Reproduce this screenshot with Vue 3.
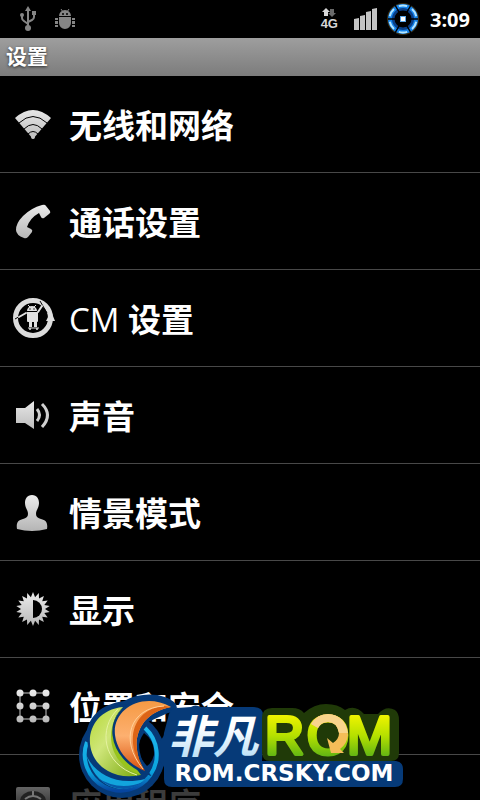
<script setup>
import { ref } from 'vue';

const title = '设置';

const items = ref([
  { icon: 'wifi', text: '无线和网络' },
  { icon: 'phone', text: '通话设置' },
  { icon: 'mod', latin: 'CM', text: '设置' },
  { icon: 'sound', text: '声音' },
  { icon: 'profile', text: '情景模式' },
  { icon: 'display', text: '显示' },
  { icon: 'security', text: '位置和安全' },
  { icon: 'apps', text: '应用程序', faded: true },
]);

// Star outline for the brightness icon
const sun = Array.from({ length: 36 }, (_, i) => {
  const r = i % 2 ? 12 : 17;
  const a = (i * Math.PI) / 18;
  return `${(24 + r * Math.sin(a)).toFixed(1)},${(24 - r * Math.cos(a)).toFixed(1)}`;
}).join(' ');

const dots = [
  [11, 11], [24, 11], [37, 11],
  [11, 24], [24, 24], [37, 24],
  [11, 37], [24, 37], [37, 37],
];
</script>

<template>
  <div class="screen">
    <header class="status-bar">
      <div class="status-group">
        <svg class="usb" width="20" height="28" viewBox="0 0 20 28" aria-hidden="true">
          <g fill="none" stroke="#858585" stroke-width="2">
            <path d="M10 5V24M4 10v3q0 2 2 3l4 3M16 9v3q0 2-2 3l-4 2" />
          </g>
          <path d="M10 1l3 5H7zM14 6h4v4h-4z" fill="#858585" />
          <circle cx="4" cy="10" r="2" fill="#858585" />
          <circle cx="10" cy="23" r="3" fill="#858585" />
        </svg>
        <svg width="22" height="22" viewBox="0 0 22 22" aria-hidden="true">
          <g fill="#858585">
            <path d="M5 8a6 6 0 0 1 12 0zM5 9h12v6a6 6 0 0 1-12 0z" />
            <path d="M1 10h3v2H1zM1 13h3v3H1zM1 17h3v2H1zM18 10h3v2h-3zM18 13h3v3h-3zM18 17h3v2h-3z" />
          </g>
          <path d="M7 1l2 3M15 1l-2 3" stroke="#858585" />
          <circle cx="9" cy="6" r="1" fill="#000" />
          <circle cx="13" cy="6" r="1" fill="#000" />
        </svg>
      </div>
      <div class="status-group right">
        <div class="network">
          <svg width="14" height="9" viewBox="0 0 14 9" aria-hidden="true">
            <path d="M4 0l4 4H6v4H2V4H0z" fill="#d8d8d8" />
            <path d="M10 9L6 5h2V1h4v4h2z" fill="#6a6a6a" />
          </svg>
          <span>4G</span>
        </div>
        <svg class="signal" width="24" height="22" viewBox="0 0 24 22" aria-hidden="true">
          <path
            d="M0 11l5-1v12H0zM6 8l5-1v15H6zM12 4l5-1v19h-5zM18 1l5-1v22h-5z"
            fill="#c4c4c4"
          />
        </svg>
        <svg class="battery" width="34" height="34" viewBox="0 0 34 34" aria-hidden="true">
          <circle cx="17" cy="17" r="15" fill="none" stroke="#3a2c10" stroke-width="2" />
          <circle cx="17" cy="17" r="11" fill="none" stroke="#0a3f86" stroke-width="6" />
          <circle cx="17" cy="17" r="13" fill="none" stroke="#1583ea" stroke-width="4" />
          <circle
            cx="17" cy="17" r="13.5" fill="none" stroke="#b4e6ff" stroke-width="2"
            pathLength="60" stroke-dasharray="6 4" stroke-dashoffset="-2"
          />
          <path d="M17 17L32 17M17 17L2 17M17 17L9 3M17 17L25 3M17 17L9 31M17 17L25 31" stroke="#000" stroke-width="1.5" />
          <circle cx="17" cy="17" r="8.5" fill="#000" />
          <path d="M14 14h6v6h-6z" fill="#5aa6e8" />
          <path d="M15 15h4v4h-4z" fill="#fff" />
        </svg>
        <time class="clock">3:09</time>
      </div>
    </header>

    <h1 class="title-bar">{{ title }}</h1>

    <ul class="settings">
      <li v-for="item in items" :key="item.icon">
        <button type="button" class="row" :class="{ faded: item.faded }">
          <svg class="icon" width="48" height="48" viewBox="0 0 48 48" aria-hidden="true">
            <defs>
              <linearGradient :id="'g-' + item.icon" x1="0" y1="0" x2="0" y2="48" gradientUnits="userSpaceOnUse">
                <stop offset="0.15" :stop-color="item.faded ? '#666' : '#ececec'" />
                <stop offset="0.9" :stop-color="item.faded ? '#111' : '#b4b4b4'" />
              </linearGradient>
            </defs>
            <g v-if="item.icon === 'wifi'">
              <path d="M6 18Q24 2 42 18L24 39z" :fill="`url(#g-${item.icon})`" />
              <g fill="none" stroke="#000" stroke-width="1">
                <path d="M10 23Q24 10 38 23M15 29Q24 20 33 29M19 34Q24 29 29 34" />
              </g>
              <circle cx="24" cy="37" r="2" fill="#c4c4c4" />
            </g>
            <path
              v-else-if="item.icon === 'phone'"
              d="M33 8q3-1 4 1l4 5q1 2-1 3l-5 4q-2 1-3-1l-2-4q-9 5-12 14l4 2q2 1 1 3l-4 5q-2 2-4 1-8-3-8-8 0-7 7-14 8-8 19-11z"
              :fill="`url(#g-${item.icon})`"
            />
            <g v-else-if="item.icon === 'mod'" fill="#e0e0e0">
              <circle cx="24" cy="24" r="17.5" fill="none" stroke="#dcdcdc" stroke-width="5" />
              <path d="M31 7l7 12M6 25l7-4" stroke="#000" stroke-width="1" />
              <path d="M37 27l5-10 4 10z" />
              <path d="M18 17a5 5 0 0 1 10 0zM18 18h11v9q0 1-1 1h-9q-1 0-1-1z" />
              <path d="M20 28h3v5h-3zM25 28h3v5h-3z" />
              <path d="M17 19l-7 4M29 18l4-6" stroke="#e0e0e0" stroke-width="2" stroke-linecap="round" />
              <path d="M19 11l2 2M27 11l-2 2M19 34h11" stroke="#e0e0e0" />
              <circle cx="21" cy="15" r="0.7" fill="#000" />
              <circle cx="25" cy="15" r="0.7" fill="#000" />
              <circle cx="21" cy="35" r="1" />
              <circle cx="28" cy="35" r="1" />
            </g>
            <g v-else-if="item.icon === 'sound'">
              <path d="M7 17h9l9-7v28l-9-6H7z" :fill="`url(#g-${item.icon})`" />
              <g fill="none" stroke="#cfcfcf" stroke-width="3">
                <path d="M28 18q5 6 0 12M33 13q11 11 0 23" />
              </g>
            </g>
            <path
              v-else-if="item.icon === 'profile'"
              d="M23 7c5 0 7 4 7 8 0 5-3 7-3 11 0 3 2 4 5 5 5 1 7 4 6 10q-15 4-30 0c-1-6 1-9 6-10 3-1 5-2 5-5 0-4-3-6-3-11 0-4 2-8 7-8z"
              :fill="`url(#g-${item.icon})`"
            />
            <g v-else-if="item.icon === 'display'">
              <polygon :points="sun" :fill="`url(#g-${item.icon})`" />
              <path d="M24 15a9 9 0 0 1 0 18z" fill="#000" />
            </g>
            <g v-else-if="item.icon === 'security'" :fill="`url(#g-${item.icon})`">
              <path d="M37 11H11V37H37V24H24" fill="none" stroke="#c4c4c4" stroke-width="1" />
              <circle v-for="dot in dots" :key="dot.join()" :cx="dot[0]" :cy="dot[1]" r="3.5" />
            </g>
            <g v-else>
              <rect x="7" y="8" width="34" height="34" rx="2" :fill="`url(#g-${item.icon})`" />
              <path d="M11 22a13 10 0 0 1 26 0z" fill="#222" />
              <path d="M24 12v6M16 20q8-6 16 0" fill="none" stroke="#777" stroke-width="2" />
            </g>
          </svg>
          <span class="label"><span v-if="item.latin" class="latin">{{ item.latin }}&nbsp;</span>{{ item.text }}</span>
        </button>
      </li>
    </ul>

    <!-- ROM site badge -->
    <div class="badge">
      <svg width="326" height="108" viewBox="77 692 326 108" role="img" aria-label="非凡ROM ROM.CRSKY.COM">
        <defs>
          <linearGradient id="ring" x1="0" y1="0" x2="0" y2="1">
            <stop offset="0" stop-color="#20b8ee" />
            <stop offset="0.7" stop-color="#0aa4de" />
            <stop offset="1" stop-color="#0645a0" />
          </linearGradient>
          <linearGradient id="leaf" x1="0" y1="0" x2="1" y2="1">
            <stop offset="0" stop-color="#b5d832" />
            <stop offset="0.4" stop-color="#cfe67a" />
            <stop offset="1" stop-color="#78a80c" />
          </linearGradient>
          <linearGradient id="flame" x1="0" y1="0" x2="0" y2="1">
            <stop offset="0" stop-color="#f59a44" />
            <stop offset="0.5" stop-color="#fdb070" />
            <stop offset="1" stop-color="#d9500c" />
          </linearGradient>
          <linearGradient id="ice" x1="0" y1="0" x2="0" y2="1">
            <stop offset="0.4" stop-color="#ffffff" />
            <stop offset="1" stop-color="#a9d8f5" />
          </linearGradient>
          <linearGradient id="lime" x1="0" y1="715" x2="0" y2="757" gradientUnits="userSpaceOnUse">
            <stop offset="0" stop-color="#f0f400" />
            <stop offset="0.5" stop-color="#b4e000" />
            <stop offset="1" stop-color="#5fb414" />
          </linearGradient>
        </defs>

        <!-- backing shapes -->
        <g fill="#063a78">
          <circle cx="122" cy="755" r="43" />
          <path d="M86 740C86 716 102 704 124 701C142 691 166 693 176 704Q179 712 168 713L148 722L140 745z" />
          <path d="M150 745q14-4 14-12L168 718q1-9 9-10l14-1q4-3 10 0h52q11 0 10 10v26l-1 18h134q7 1 7 8v10q0 8-8 8H172q-8 0-8-8v-12z" />
        </g>
        <path
          d="M262 752V718q0-10 10-10h20q8 0 12 5 10-9 22-9 12 0 19 6 10-6 19 4h14q8-9 17-4 4 3 4 10v33q0 8-8 8H270q-8 0-8-9z"
          fill="#203a08"
        />
        <path d="M144 733Q155 741 154 755Q152 763 147 766Q132 750 144 733z" fill="#000" />

        <!-- swirl -->
        <path d="M145 728A36 36 0 1 1 87 742" fill="none" stroke="url(#ring)" stroke-width="4" />
        <path d="M86 754C94 774 116 786 145 779C132 794 98 796 86 754z" fill="#12a4dc" />
        <path d="M96 777Q119 792 143 782Q121 798 96 777z" fill="#0759a9" />
        <path d="M123 707C84 711 80 756 108 771Q122 779 141 775C118 762 101 728 123 707z" fill="url(#leaf)" stroke="#063a78" stroke-width="5" paint-order="stroke" />
        <path d="M123 707C104 726 106 764 141 775Q124 752 115 740Q112 722 123 707z" fill="#98c41c" />
        <path d="M118 709C98 728 102 764 137 775" fill="none" stroke="#e5f2a0" />
        <path d="M171 707C143 691 112 709 115 735C117 752 130 765 145 771C129 747 135 714 171 707z" fill="url(#flame)" stroke="#063a78" stroke-width="5" paint-order="stroke" />
        <path d="M165 706C133 708 122 742 145 771C129 747 135 714 171 707z" fill="#dc6416" />
        <path d="M164 706C130 708 119 740 143 769" fill="none" stroke="#ffd09a" />

        <!-- wordmark -->
        <text class="cn" x="168" y="753" fill="url(#ice)">非凡</text>
        <g class="rom" fill="url(#lime)" stroke="url(#lime)" stroke-width="4" stroke-linejoin="round">
          <text x="265" y="754">R</text>
          <text x="307" y="754">O</text>
          <text x="347" y="754">M</text>
        </g>
        <path d="M311 724Q317 714 328 714Q346 715 348 735Q347 744 340 749L344 753L331 753L327 738L333 743Q339 739 339 733Q337 722 328 722Q321 722 318 728z" fill="#f5bd58" />
        <path d="M311 724Q317 714 328 714Q345 715 348 733L339 733Q337 722 328 722Q321 722 318 728z" fill="#f9d48c" />
        <text class="url" x="284" y="781" text-anchor="middle" fill="#fff">ROM.CRSKY.COM</text>
      </svg>
    </div>
  </div>
</template>

<style>
body {
  background: #000;
}
</style>

<style scoped>
.screen {
  position: relative;
  height: 100vh;
  overflow: hidden;
  background: #000;
  color: #fff;
  font-family: "Open Sans", "Noto Sans CJK SC", sans-serif;
}

.status-bar {
  display: flex;
  justify-content: space-between;
  align-items: center;
  height: 38px;
  padding: 0 10px 0 18px;
}

.status-group {
  display: flex;
  align-items: center;
  gap: 16px;
}

.status-group.right {
  gap: 8px;
}

.network {
  display: flex;
  flex-direction: column;
  align-items: center;
  margin-right: 8px;
  color: #d8d8d8;
  font: bold 13px/13px "Liberation Sans", sans-serif;
}

.clock {
  margin-left: 2px;
  font-size: 20px;
  font-weight: 700;
}

.title-bar {
  height: 38px;
  margin: 0;
  padding-left: 6px;
  background: linear-gradient(#9e9e9e, #7c7c7c);
  font-size: 21px;
  line-height: 37px;
  text-shadow: 0 1px 3px rgba(0, 0, 0, 0.7);
}

.settings {
  margin: 0;
  padding: 0;
  list-style: none;
}

.settings li {
  border-bottom: 1px solid #484848;
}

.row {
  display: flex;
  align-items: center;
  gap: 12px;
  width: 100%;
  height: 96px;
  padding: 0 9px;
  border: 0;
  background: none;
  color: #fff;
  font-family: inherit;
  font-size: 33px;
  font-weight: 700;
  text-align: left;
}

.row.faded {
  color: #3c3c3c;
}

.icon {
  flex: none;
}

.label {
  padding-top: 4px;
  line-height: 48px;
}

.latin {
  font-weight: 400;
}

.badge {
  position: absolute;
  right: 0;
  bottom: 0;
  left: 0;
  display: flex;
  justify-content: center;
  pointer-events: none;
}

.cn {
  font: italic 700 45px "Noto Sans CJK SC", sans-serif;
}

.rom {
  font: 54px "Liberation Sans", sans-serif;
}

.url {
  font: bold 23px "DejaVu Sans", sans-serif;
}
</style>
